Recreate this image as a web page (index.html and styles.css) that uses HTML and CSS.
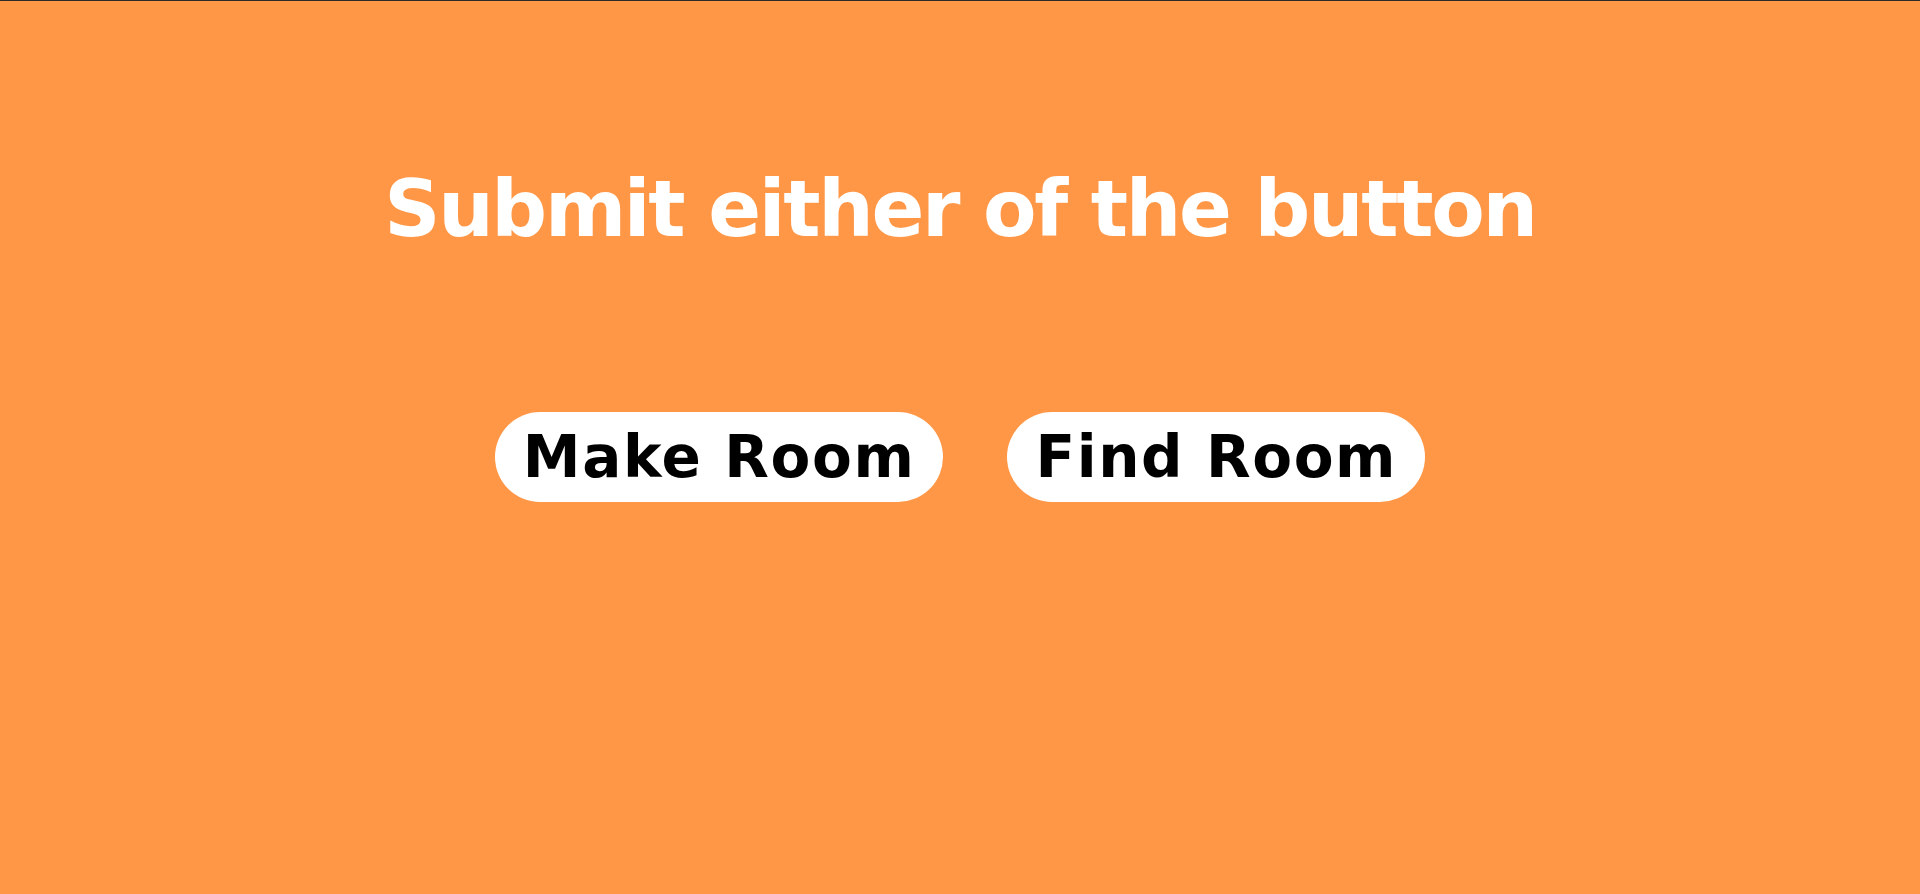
FILE: index.html
```html
<!DOCTYPE html>
<html lang="en">
<head>
<meta charset="utf-8">
<title>Rooms</title>
<link rel="stylesheet" href="styles.css">
</head>
<body>
<main class="page">
  <h1 class="title">Submit either of the button</h1>
  <div class="actions">
    <button class="btn" type="button">Make Room</button>
    <button class="btn" type="button">Find Room</button>
  </div>
</main>
</body>
</html>
```
FILE: styles.css
```css
html, body {
  margin: 0;
  padding: 0;
  height: 100%;
}
body {
  background: #ff9747;
  border-top: 1px solid #2b2b2b;
  box-sizing: border-box;
  font-family: "DejaVu Sans", "Liberation Sans", sans-serif;
}
.page {
  display: flex;
  flex-direction: column;
  align-items: center;
  padding-top: 160px;
}
.title {
  margin: 0;
  color: #ffffff;
  font-size: 78px;
  font-weight: 700;
  line-height: 96px;
  letter-spacing: -2.3px;
}
.actions {
  display: flex;
  gap: 64px;
  margin-top: 155px;
}
.btn {
  font-family: inherit;
  font-size: 58px;
  font-weight: 700;
  color: #000000;
  background: #ffffff;
  border: none;
  border-radius: 45px;
  height: 90px;
  padding: 0 28px;
  letter-spacing: 1.6px;
  cursor: pointer;
}
```
